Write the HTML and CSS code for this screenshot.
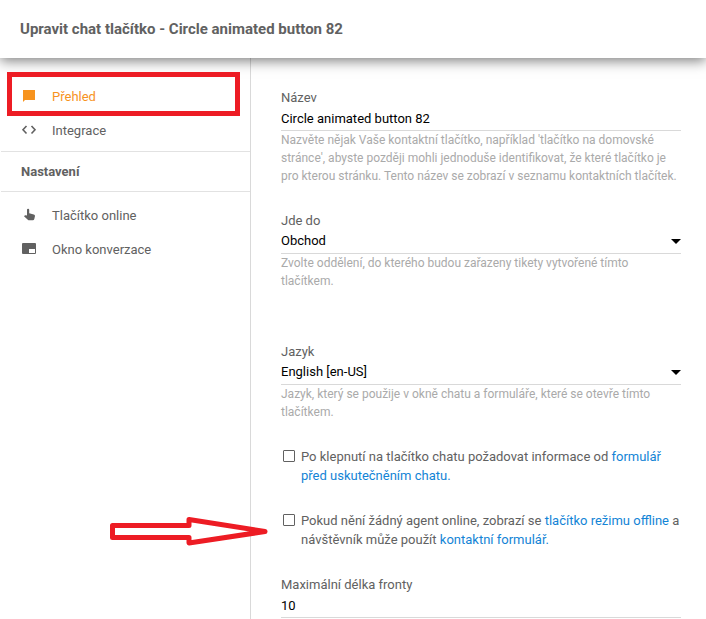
FILE: index.html
```html
<!DOCTYPE html>
<html lang="cs">
<head>
<meta charset="utf-8">
<meta name="viewport" content="width=device-width, initial-scale=1">
<title>Upravit chat tlačítko</title>
<link rel="stylesheet" href="styles.css">
</head>
<body>
<header class="header">
  <h1 class="title">Upravit chat tlačítko - Circle animated button 82</h1>
</header>
<div class="layout">
  <nav class="sidebar">
    <ul class="menu">
      <li><a class="item active" href="#prehled">
        <svg class="icon" viewBox="0 0 16 16"><path d="M2 2h12v10H4l-2 2z" fill="currentColor"/></svg>
        Přehled</a></li>
      <li><a class="item" href="#integrace">
        <svg class="icon" viewBox="0 0 16 16"><path d="M5.500 4L2 7.800 5.500 11.500M10.500 4L14 7.800 10.500 11.500" fill="none" stroke="currentColor" stroke-width="1.600"/></svg>
        Integrace</a></li>
    </ul>
    <h2 class="section">Nastavení</h2>
    <ul class="menu">
      <li><a class="item" href="#tlacitko">
        <svg class="icon" viewBox="0 0 16 16"><path d="M6 2.800a1.100 1.100 0 0 1 2.200 0V6.200l4.600 1.300q1.200.4 1.200 1.500L13.300 12q-.3 1.300-1.500 1.300H8.200q-.8 0-1.400-.6L3 9.200l.7-.8q.5-.4 1.100-.2L6 8.600z" fill="currentColor"/></svg>
        Tlačítko online</a></li>
      <li><a class="item" href="#okno">
        <svg class="icon" viewBox="0 0 16 16"><path fill-rule="evenodd" d="M2 2h12q1 0 1 1v9q0 1-1 1H2q-1 0-1-1V3q0-1 1-1zM8 8v4h6V8z" fill="currentColor"/></svg>
        Okno konverzace</a></li>
    </ul>
  </nav>
  <main class="content">
    <div class="field">
      <label class="label" for="name">Název</label>
      <input class="control" id="name" type="text" value="Circle animated button 82">
      <p class="help">Nazvěte nějak Vaše kontaktní tlačítko, například 'tlačítko na domovské stránce', abyste později mohli jednoduše identifikovat, že které tlačítko je pro kterou stránku. Tento název se zobrazí v seznamu kontaktních tlačítek.</p>
    </div>
    <div class="field field-spaced">
      <label class="label" for="department">Jde do</label>
      <select class="control select" id="department"><option>Obchod</option></select>
      <p class="help">Zvolte oddělení, do kterého budou zařazeny tikety vytvořené tímto tlačítkem.</p>
    </div>
    <div class="field">
      <label class="label" for="language">Jazyk</label>
      <select class="control select" id="language"><option>English [en-US]</option></select>
      <p class="help">Jazyk, který se použije v okně chatu a formuláře, které se otevře tímto tlačítkem.</p>
    </div>
    <div class="check">
      <input class="box" id="prechat" type="checkbox">
      <label for="prechat">Po klepnutí na tlačítko chatu požadovat informace od <a href="#formular">formulář před uskutečněním chatu.</a></label>
    </div>
    <div class="check">
      <input class="box" id="offline" type="checkbox">
      <label for="offline">Pokud nění žádný agent online, zobrazí se <a href="#offline-tlacitko">tlačítko režimu offline</a> a návštěvník může použít <a href="#kontakt">kontaktní formulář.</a></label>
    </div>
    <div class="field">
      <label class="label" for="queue">Maximální délka fronty</label>
      <input class="control" id="queue" type="text" value="10">
    </div>
  </main>
</div>
<div class="highlight"></div>
<svg class="arrow" viewBox="0 0 160 32"><path d="M3.500 10.500H80V4.500L156 16.500 80 28V22.500H3.500z" fill="none" stroke="#ed1c24" stroke-width="5" stroke-linejoin="round"/></svg>
</body>
</html>
```
FILE: styles.css
```css
* { box-sizing: border-box; }

body {
  margin: 0;
  min-height: 100vh;
  display: flex;
  flex-direction: column;
  position: relative;
  overflow: hidden;
  background: #fff;
  color: #616161;
  font: 13px/20px Roboto, "Liberation Sans", sans-serif;
}

a { color: #1384d6; text-decoration: none; }

.header {
  position: relative;
  padding: 19px 20px;
  background: #fff;
  box-shadow: 0 3px 12px rgba(0, 0, 0, .5);
}

.title {
  margin: 0;
  font-size: 15px;
  line-height: 20px;
  font-weight: 700;
}

.layout {
  flex: 1;
  display: grid;
  grid-template-columns: 251px minmax(0, 1fr);
}

.sidebar {
  padding: 22px 0 0 1px;
  border-right: 1px solid #d9d9d9;
}

.menu { margin: 0; padding: 0; list-style: none; }

.item {
  display: flex;
  align-items: center;
  gap: 15px;
  height: 34px;
  padding-left: 20px;
  color: #616161;
}

.item.active { color: #f7931e; }

.icon { width: 16px; height: 16px; margin-bottom: 2px; }

.section {
  margin: 3px 0 7px;
  padding: 10px 20px;
  border: solid #e2e2e2;
  border-width: 1px 0;
  font-size: 13px;
  line-height: 19px;
  font-weight: 700;
}

.content {
  display: flex;
  flex-direction: column;
  gap: 26px;
  padding: 30px 25px 0 30px;
}

.field { display: flex; flex-direction: column; }

.field-spaced { margin-bottom: 26px; }

.control {
  width: 100%;
  height: 23px;
  margin: 0;
  padding: 0 0 2px;
  border: 0;
  border-bottom: 1px solid #d9d9d9;
  border-radius: 0;
  outline: 0;
  background: transparent;
  color: #000;
  font: inherit;
}

.select {
  appearance: none;
  padding-bottom: 4px;
  background: url("data:image/svg+xml,%3Csvg xmlns='http://www.w3.org/2000/svg' viewBox='0 0 10 5'%3E%3Cpath d='M0 0h10L5 5z'/%3E%3C/svg%3E") no-repeat right 8px / 10px 5px;
}

.help {
  margin: 0;
  color: #aaa;
  font-size: 12px;
  line-height: 18px;
}

.check {
  display: flex;
  align-items: flex-start;
  gap: 6px;
  margin-right: -4px;
  padding-left: 2px;
  line-height: 19px;
}

.box {
  appearance: none;
  flex: none;
  width: 12px;
  height: 12px;
  margin: 3px 0 0;
  border: 1px solid #616161;
  border-radius: 1px;
}

.highlight {
  position: absolute;
  left: 7px;
  top: 72px;
  width: 233px;
  height: 44px;
  border: 5px solid #ed1c24;
  pointer-events: none;
}

.arrow {
  position: absolute;
  left: 109px;
  top: 515px;
  width: 160px;
  height: 32px;
  pointer-events: none;
}
```
